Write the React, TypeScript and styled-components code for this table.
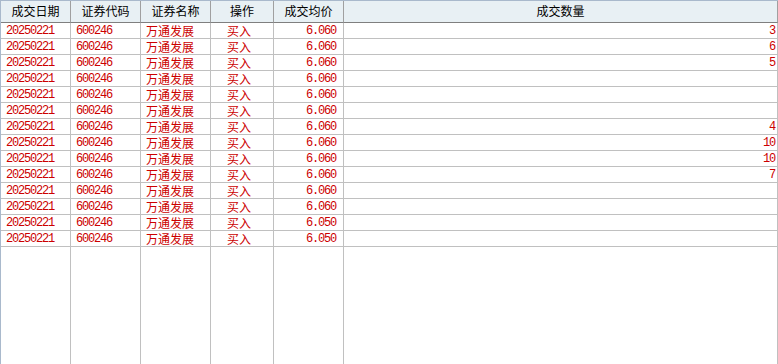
import React from "react";
import styled, { createGlobalStyle } from "styled-components";

const Global = createGlobalStyle`
  html, body { margin: 0; padding: 0; background: #ffffff; }
  body { overflow: hidden; }
`;

const Frame = styled.div`
  width: 778px;
  height: 364px;
  box-sizing: border-box;
  border-left: 1px solid #a9b9cc;
  border-top: 1px solid #a9b9cc;
  display: grid;
  grid-template-columns: 70px 70px 70px 63px 70px 1fr;
  grid-template-rows: 22px repeat(14, 16px) 1fr;
  background: #ffffff;
`;

const HeadCell = styled.div`
  box-sizing: border-box;
  background: #e8f0f4;
  border-right: 1px solid #a0a0a0;
  border-bottom: 1px solid #7f7f7f;
  display: flex;
  align-items: center;
  justify-content: center;
  font-family: "Noto Sans CJK SC", "Noto Sans", sans-serif;
  font-size: 12px;
  color: #000000;
  line-height: 1;
  padding-bottom: 1px;
`;

type Align = "left" | "center" | "right";

const Cell = styled.div<{ $align: Align; $cjk?: boolean; $pad?: number }>`
  box-sizing: border-box;
  border-right: 1px solid #c0c0c0;
  border-bottom: 1px solid #c0c0c0;
  display: flex;
  align-items: center;
  justify-content: ${(p) =>
    p.$align === "left" ? "flex-start" : p.$align === "right" ? "flex-end" : "center"};
  padding: 1px ${(p) => p.$pad ?? 6}px 0 ${(p) => (p.$align === "left" ? 5 : 0)}px;
  font-family: ${(p) =>
    p.$cjk ? `"Noto Sans CJK SC", sans-serif` : `"Liberation Mono", monospace`};
  font-size: 12px;
  letter-spacing: ${(p) => (p.$cjk ? "0" : "-1.2px")};
  color: #cc0000;
  line-height: 1;
  white-space: nowrap;
  overflow: hidden;
`;

const Filler = styled.div`
  box-sizing: border-box;
  border-right: 1px solid #c0c0c0;
`;

const headers = ["成交日期", "证券代码", "证券名称", "操作", "成交均价", "成交数量"];

const qty = ["3", "6", "5", "", "", "", "4", "10", "10", "7", "", "", "", ""];
const rows = qty.map((q, i) => ({
  date: "20250221",
  code: "600246",
  name: "万通发展",
  op: "买入",
  price: i >= 12 ? "6.050" : "6.060",
  qty: q,
}));

export default function App() {
  return (
    <>
      <Global />
      <Frame>
        {headers.map((h) => (
          <HeadCell key={h}>{h}</HeadCell>
        ))}
        {rows.map((r, i) => (
          <React.Fragment key={i}>
            <Cell $align="left">{r.date}</Cell>
            <Cell $align="left">{r.code}</Cell>
            <Cell $align="left" $cjk>{r.name}</Cell>
            <Cell $align="center" $cjk>{r.op}</Cell>
            <Cell $align="right" $pad={7}>{r.price}</Cell>
            <Cell $align="right" $pad={2}>{r.qty}</Cell>
          </React.Fragment>
        ))}
        {headers.map((h) => (
          <Filler key={"f" + h} />
        ))}
      </Frame>
    </>
  );
}
